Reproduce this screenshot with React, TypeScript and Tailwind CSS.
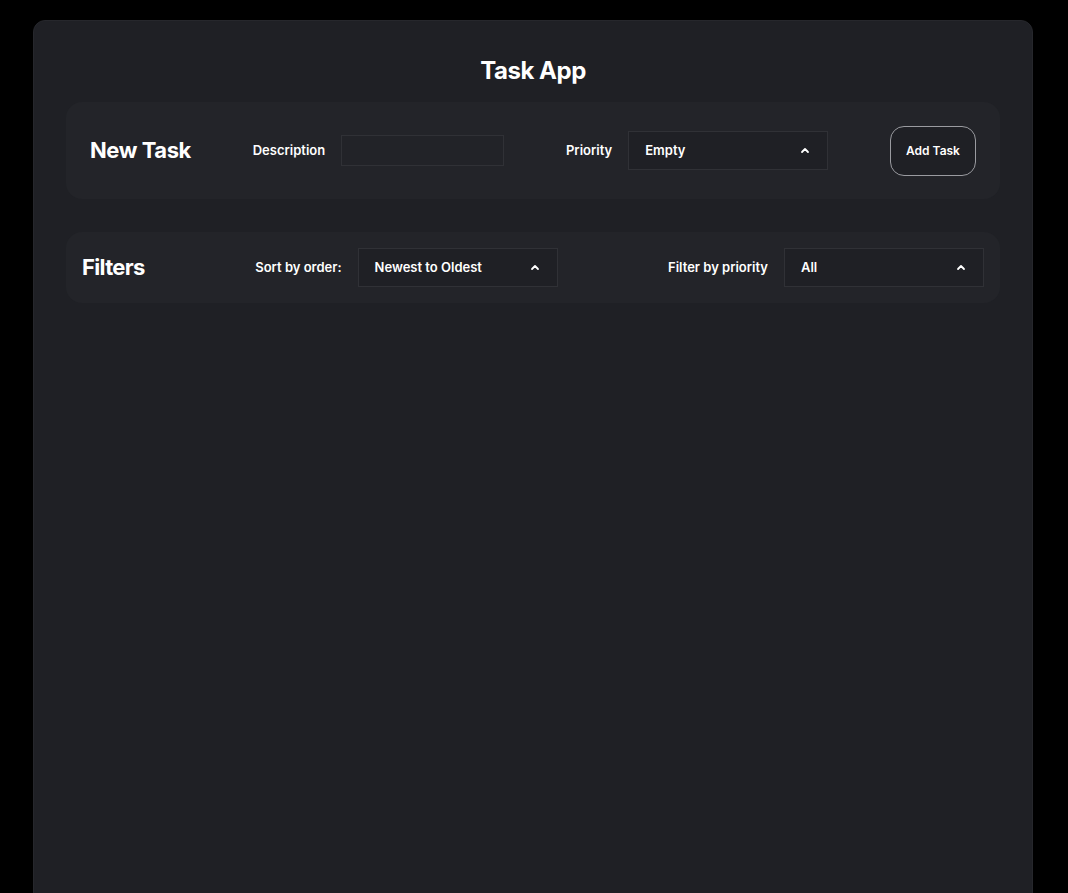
import React, { useState } from 'react';

const Caret: React.FC = () => (
  <svg width="10" height="7" viewBox="0 0 10 7" fill="none" className="text-white">
    <path d="M2 5 L5 2 L8 5" stroke="currentColor" strokeWidth="1.8" strokeLinecap="round" strokeLinejoin="round" />
  </svg>
);

interface SelectProps {
  value: string;
}

const FakeSelect: React.FC<SelectProps> = ({ value }) => (
  <button className="flex h-[39px] w-[200px] items-center justify-between border border-[#303136] bg-[#1f2025] pl-[16px] pr-[17px] text-[13px] font-semibold text-white">
    <span>{value}</span>
    <Caret />
  </button>
);

const App: React.FC = () => {
  const [description, setDescription] = useState('');

  return (
    <div className="min-h-screen bg-black pt-[20px] font-['Inter',sans-serif]">
      <div className="ml-[33px] min-h-[900px] w-[1000px] rounded-t-[12px] border border-[#26272c] bg-[#1f2025] px-[32px] pt-[32px]">
        <h1 className="text-center text-[24px] font-bold leading-[36px] tracking-[-0.02em] text-white">Task App</h1>

        {/* New task */}
        <div className="mt-[13px] flex h-[97px] items-center justify-between rounded-[16px] bg-[#232429] px-[24px]">
          <h2 className="text-[22px] font-bold tracking-[-0.02em] text-white">New Task</h2>
          <div className="flex items-center gap-[16px]">
            <label className="text-[13px] font-semibold text-white">Description</label>
            <input
              value={description}
              onChange={(e) => setDescription(e.target.value)}
              className="h-[31px] w-[163px] border border-[#303136] bg-[#222328] px-2 text-[13px] text-white outline-none"
            />
          </div>
          <div className="flex items-center gap-[16px]">
            <span className="text-[13px] font-semibold text-white">Priority</span>
            <FakeSelect value="Empty" />
          </div>
          <button className="h-[50px] w-[86px] rounded-[14px] border border-[#9a9ba0] bg-[#1f2025] text-[12px] font-semibold text-white">
            Add Task
          </button>
        </div>

        {/* Filters */}
        <div className="mt-[33px] flex h-[71px] items-center justify-between rounded-[16px] bg-[#232429] px-[16px]">
          <h2 className="text-[22px] font-bold tracking-[-0.03em] text-white">Filters</h2>
          <div className="flex items-center gap-[16px]">
            <span className="text-[13px] font-semibold text-white">Sort by order:</span>
            <FakeSelect value="Newest to Oldest" />
          </div>
          <div className="flex items-center gap-[16px]">
            <span className="text-[13px] font-semibold text-white">Filter by priority</span>
            <FakeSelect value="All" />
          </div>
        </div>
      </div>
    </div>
  );
};

export default App;
